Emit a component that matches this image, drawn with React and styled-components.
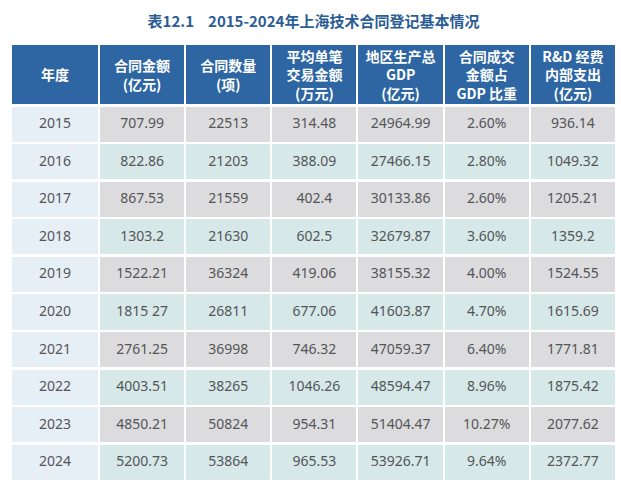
import React from "react";
import styled, { createGlobalStyle } from "styled-components";

const GlobalStyle = createGlobalStyle`
  html, body {
    margin: 0;
    padding: 0;
    background: #ffffff;
  }
  body {
    font-family: "Noto Sans", "Noto Sans CJK SC", sans-serif;
  }
`;

const headers = [
  ["年度"],
  ["合同金额", "(亿元)"],
  ["合同数量", "(项)"],
  ["平均单笔", "交易金额", "(万元)"],
  ["地区生产总", "GDP", "(亿元)"],
  ["合同成交", "金额占", "GDP 比重"],
  ["R&D 经费", "内部支出", "(亿元)"],
];

const rows = [
  ["2015", "707.99", "22513", "314.48", "24964.99", "2.60%", "936.14"],
  ["2016", "822.86", "21203", "388.09", "27466.15", "2.80%", "1049.32"],
  ["2017", "867.53", "21559", "402.4", "30133.86", "2.60%", "1205.21"],
  ["2018", "1303.2", "21630", "602.5", "32679.87", "3.60%", "1359.2"],
  ["2019", "1522.21", "36324", "419.06", "38155.32", "4.00%", "1524.55"],
  ["2020", "1815 27", "26811", "677.06", "41603.87", "4.70%", "1615.69"],
  ["2021", "2761.25", "36998", "746.32", "47059.37", "6.40%", "1771.81"],
  ["2022", "4003.51", "38265", "1046.26", "48594.47", "8.96%", "1875.42"],
  ["2023", "4850.21", "50824", "954.31", "51404.47", "10.27%", "2077.62"],
  ["2024", "5200.73", "53864", "965.53", "53926.71", "9.64%", "2372.77"],
];

const Page = styled.div`
  width: 621px;
  height: 486px;
  padding: 11px 0 0 12px;
  box-sizing: border-box;
  overflow: hidden;
`;

const Title = styled.h1`
  margin: 0 0 15px;
  width: 603px;
  display: flex;
  justify-content: center;
  gap: 14px;
  font-family: "Noto Sans CJK SC", "Noto Sans", sans-serif;
  font-size: 15px;
  line-height: 19px;
  font-weight: 700;
  color: #2b5d95;
`;

const Table = styled.div`
  width: 603px;
  display: grid;
  grid-template-columns: 86px repeat(6, 1fr);
  grid-template-rows: 59px;
  grid-auto-rows: 35.1px;
  gap: 2.5px 2px;
`;

const HeadCell = styled.div`
  background: #2d66a2;
  color: #ffffff;
  display: flex;
  flex-direction: column;
  align-items: center;
  justify-content: center;
  font-family: "Noto Sans CJK SC", "Noto Sans", sans-serif;
  font-size: 14px;
  font-weight: 700;
  line-height: 18.5px;
  text-align: center;
`;

const Cell = styled.div`
  display: flex;
  align-items: center;
  justify-content: center;
  padding-bottom: 3px;
  box-sizing: border-box;
  font-family: "Noto Sans", sans-serif;
  font-size: 14px;
  color: #555558;
  background: ${(p) => (p.$year ? "#e6eef6" : p.$alt ? "#d6e8e8" : "#dcdcde")};
`;

export default function App() {
  return (
    <>
      <GlobalStyle />
      <Page>
        <Title>
          <span>表12.1</span>
          <span>2015-2024年上海技术合同登记基本情况</span>
        </Title>
        <Table>
          {headers.map((lines, i) => (
            <HeadCell key={"h" + i}>
              {lines.map((l) => (
                <span key={l}>{l}</span>
              ))}
            </HeadCell>
          ))}
          {rows.map((row, r) =>
            row.map((val, c) => (
              <Cell key={r + "-" + c} $year={c === 0} $alt={r % 2 === 1}>
                {val}
              </Cell>
            ))
          )}
        </Table>
      </Page>
    </>
  );
}
